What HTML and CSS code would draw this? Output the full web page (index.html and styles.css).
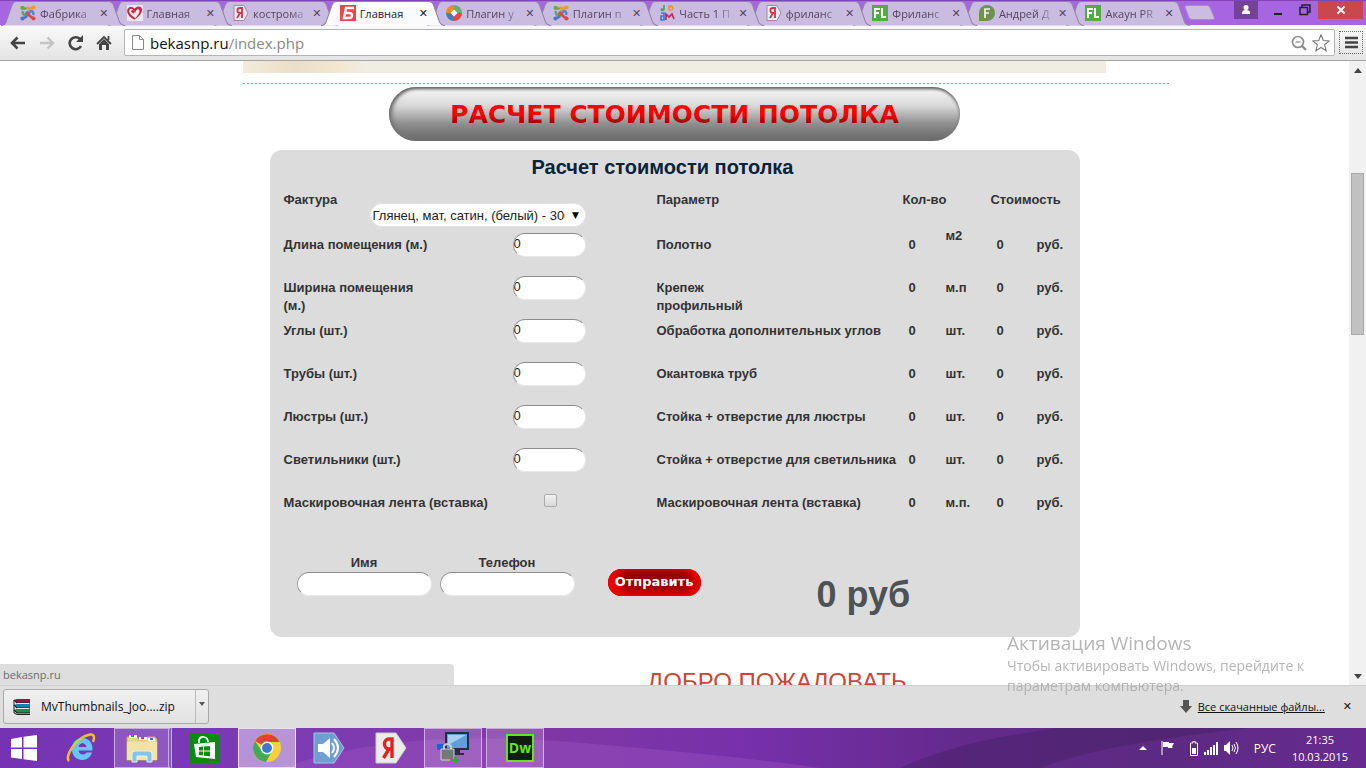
FILE: index.html
```html
<!DOCTYPE html>
<html lang="ru">
<head>
<meta charset="utf-8">
<title>Расчет стоимости потолка</title>
<link rel="stylesheet" href="styles.css">
</head>
<body>
<svg class="defs" width="0" height="0" aria-hidden="true">
  <symbol id="tab-shape" viewBox="0 0 124 25" preserveAspectRatio="none"><path d="M0 24.5C4 24.5 4 23 5 21L11 4C12 1.500 13 .5 15 .5H107C110 .5 111 1.500 112 4L118 21C119 23 120 24.500 124 24.500"/></symbol>
  <symbol id="joomla" viewBox="0 0 16 16"><g fill="none" stroke-width="2.600"><path d="M3 6c-1 3 1 5 3 3l4-4" stroke="#6aa742"/><path d="M6 3c3-1 5 1 3 3L8 7M10 3.500c2-1.500 3-.5 3.500 0" stroke="#f0963a"/><path d="M13 10c1-3-1-5-3-3L6 11" stroke="#5a86c8"/><path d="M6 7l4 4c2 2 3 2 4 2" stroke="#e0483e"/><path d="M3 13c2 0 3-1 4-2" stroke="#4a78c0"/><path d="M3 3c1 0 2 0 3 1.500" stroke="#6aa742"/></g><circle cx="2.500" cy="2.800" r="2.100" fill="#6aa742"/><circle cx="13.500" cy="2.500" r="2.100" fill="#f0963a"/><circle cx="2.500" cy="13.500" r="2.100" fill="#4a78c0"/><circle cx="13.500" cy="13.500" r="2.100" fill="#e0483e"/></symbol>
  <symbol id="heart" viewBox="0 0 16 16"><path fill="#eee6f0" d="M0 0h16v16H0z"/><path d="M7 8L4.500 5.500M8 14C3 11 0 8 1.500 4.500 3 2 6 2.500 7.500 5" fill="none" stroke="#c52a3e" stroke-width="2"/><path d="M6 6C8 1 14 0 15 4c.6 4-3 7-7 10.500 1-3 5-6 4.500-9C12 3.500 9 4 8.500 7.500z" fill="#c52a3e"/></symbol>
  <symbol id="yandex" viewBox="0 0 16 16"><path d="M1 .5h10l4 7.500-4 7.500H1z" fill="#f3e9f5" stroke="#9a8aa8"/><path d="M9 13V3H7C3.500 3 3.500 8 7 8h2M7 8l-3 5" fill="none" stroke="#d43248" stroke-width="1.800"/></symbol>
  <symbol id="bekas" viewBox="0 0 16 16"><path fill="#e8474b" d="M0 0h16v16H0z"/><path d="M14 3H6L4 13h5c4 0 4-5 0-5H5" fill="none" stroke="#fff" stroke-width="2.400"/></symbol>
  <symbol id="wheel" viewBox="0 0 16 16"><path fill="#e8883a" d="M8 8V0a8 8 0 0 0-8 8z"/><path fill="#63b070" d="M8 8h8a8 8 0 0 0-8-8z"/><path fill="#e2474a" d="M8 8v8a8 8 0 0 0 8-8z"/><path fill="#3f7fbd" d="M8 8H0a8 8 0 0 0 8 8z"/><path fill="#fff" d="M8 4.500l3.500 3.500L8 11.500 4.500 8z"/></symbol>
  <symbol id="letters" viewBox="0 0 16 16"><g fill="none" stroke-width="1.700"><path d="M2 4h3V0M5 4c0 2-3 2-3 0" stroke="#4ea84c"/><path d="M9 1h3c3 1 2 4 0 4-3 0-3-3 0-3" stroke="#e29a42"/><path d="M2 8h3v3H2v4h3v-4" stroke="#397fd0"/><path d="M7 15V9l3 3 3-3 2 5" stroke="#cb294c"/></g></symbol>
  <symbol id="fl" viewBox="0 0 16 16"><path fill="#5aa548" d="M0 0h16v16H0z"/><path d="M3 13V4h5M3 8h4M10 3v9h4" fill="none" stroke="#fff" stroke-width="1.900"/></symbol>
  <symbol id="free" viewBox="0 0 16 16"><path fill="#70934c" d="M0 16V8a8 8 0 1 1 8 8z"/><path d="M6 13V4h5M6 8h4" fill="none" stroke="#f2f5ea" stroke-width="1.700"/></symbol>
</svg>

<header class="tabstrip">
  <nav class="tabs" aria-label="Вкладки">
    <div class="tab"><svg class="shape"><use href="#tab-shape"/></svg><svg class="fav"><use href="#joomla"/></svg><span class="name">Фабрика</span><button class="close" aria-label="Закрыть">✕</button></div>
    <div class="tab"><svg class="shape"><use href="#tab-shape"/></svg><svg class="fav"><use href="#heart"/></svg><span class="name">Главная</span><button class="close" aria-label="Закрыть">✕</button></div>
    <div class="tab"><svg class="shape"><use href="#tab-shape"/></svg><svg class="fav"><use href="#yandex"/></svg><span class="name">кострома</span><button class="close" aria-label="Закрыть">✕</button></div>
    <div class="tab active"><svg class="shape"><use href="#tab-shape"/></svg><svg class="fav"><use href="#bekas"/></svg><span class="name">Главная</span><button class="close" aria-label="Закрыть">✕</button></div>
    <div class="tab"><svg class="shape"><use href="#tab-shape"/></svg><svg class="fav"><use href="#wheel"/></svg><span class="name">Плагин у</span><button class="close" aria-label="Закрыть">✕</button></div>
    <div class="tab"><svg class="shape"><use href="#tab-shape"/></svg><svg class="fav"><use href="#joomla"/></svg><span class="name">Плагин п</span><button class="close" aria-label="Закрыть">✕</button></div>
    <div class="tab"><svg class="shape"><use href="#tab-shape"/></svg><svg class="fav"><use href="#letters"/></svg><span class="name">Часть 1 П</span><button class="close" aria-label="Закрыть">✕</button></div>
    <div class="tab"><svg class="shape"><use href="#tab-shape"/></svg><svg class="fav"><use href="#yandex"/></svg><span class="name">фриланс</span><button class="close" aria-label="Закрыть">✕</button></div>
    <div class="tab"><svg class="shape"><use href="#tab-shape"/></svg><svg class="fav"><use href="#fl"/></svg><span class="name">Фриланс</span><button class="close" aria-label="Закрыть">✕</button></div>
    <div class="tab"><svg class="shape"><use href="#tab-shape"/></svg><svg class="fav"><use href="#free"/></svg><span class="name">Андрей Д</span><button class="close" aria-label="Закрыть">✕</button></div>
    <div class="tab"><svg class="shape"><use href="#tab-shape"/></svg><svg class="fav"><use href="#fl"/></svg><span class="name">Акаун PR</span><button class="close" aria-label="Закрыть">✕</button></div>
  </nav>
  <button class="newtab" aria-label="Новая вкладка"><svg width="32" height="16" viewBox="0 0 32 16"><path d="M1 2Q1 .5 3 .5H23Q25 .5 26 2.500L30 12Q31 14.500 29 14.500H8Q6 14.500 5 12.500z" fill="#cbbde2" stroke="#a98bc8"/></svg></button>
  <div class="window-buttons">
    <button class="user" aria-label="Пользователь"><svg width="12" height="12" viewBox="0 0 12 12"><circle cx="6" cy="3.500" r="2.500" fill="#fff"/><path d="M2 10V8.500Q2 6 6 6t4 2.500V10z" fill="#fff"/></svg></button>
    <button class="min" aria-label="Свернуть"><svg width="10" height="12" viewBox="0 0 10 12"><path d="M1 9h8v2H1z" fill="#222"/></svg></button>
    <button class="max" aria-label="Восстановить"><svg width="12" height="12" viewBox="0 0 12 12"><path d="M3 3V1h8v7H9M1 3.500h7.500v7H1z" fill="none" stroke="#222" stroke-width="1.500"/></svg></button>
    <button class="quit" aria-label="Закрыть окно"><svg width="10" height="10" viewBox="0 0 10 10"><path d="M1.500 1.500l7 7M8.500 1.500l-7 7" stroke="#fff" stroke-width="1.800"/></svg></button>
  </div>
</header>

<div class="toolbar">
  <button aria-label="Назад"><svg width="18" height="16" viewBox="0 0 18 16"><path d="M17 8H4M9.500 2.500L4 8l5.500 5.500" fill="none" stroke="#444" stroke-width="2.600"/></svg></button>
  <button aria-label="Вперёд"><svg width="18" height="16" viewBox="0 0 18 16"><path d="M3 8h13M10.500 2.500L16 8l-5.500 5.500" fill="none" stroke="#c4c4c4" stroke-width="2.400"/></svg></button>
  <button aria-label="Обновить"><svg width="18" height="16" viewBox="0 0 18 16"><path d="M15 11a6 6 0 1 1-1-7" fill="none" stroke="#444" stroke-width="2.600"/><path d="M17 0v7h-7z" fill="#444"/></svg></button>
  <button aria-label="Домой"><svg width="18" height="16" viewBox="0 0 18 16"><path d="M9 4l5 5v6h-3v-5H7v5H4V9z" fill="#444"/><path d="M2 9l7-7 7 7M13.500 1v4" fill="none" stroke="#444" stroke-width="1.800"/></svg></button>
  <div class="address">
    <svg width="12" height="15" viewBox="0 0 12 15"><path d="M.5.5H7.500L11.500 4.500V14.500H.5zM7.500.5V4.500H11.500" fill="#fff" stroke="#8a8a8a"/></svg>
    <span class="url">bekasnp.ru<span>/index.php</span></span>
    <button aria-label="Масштаб"><svg width="16" height="16" viewBox="0 0 16 16"><circle cx="7" cy="7" r="5.500" fill="none" stroke="#8c8c8c" stroke-width="1.700"/><path d="M4.500 7h5" stroke="#8c8c8c" stroke-width="1.200"/><path d="M11 11l4 4" stroke="#8c8c8c" stroke-width="2.400"/></svg></button>
    <button aria-label="Закладка"><svg width="18" height="18" viewBox="0 0 18 18"><path d="M9 .8l2.300 5.700 6 .4-4.700 3.900 1.600 6L9 13.500l-5.200 3.300 1.600-6L.7 6.900l6-.4z" fill="#fff" stroke="#777" stroke-width="1.100"/></svg></button>
  </div>
  <button class="menu" aria-label="Меню"><svg width="13" height="13" viewBox="0 0 13 13"><path d="M0 2h13M0 6.500h13M0 11h13" stroke="#444" stroke-width="2.600"/></svg></button>
</div>

<div class="viewport">
  <main class="page">
    <div class="content">
      <div class="banner"></div>
      <div class="rule"></div>
      <button class="headline"><span>РАСЧЕТ СТОИМОСТИ ПОТОЛКА</span></button>
      <form class="calc">
        <h2>Расчет стоимости потолка</h2>
        <div class="columns">
          <div class="inputs">
            <div class="row first"><label for="texture">Фактура</label><span class="select"><select id="texture"><option>Глянец, мат, сатин, (белый) - 300</option></select></span></div>
            <div class="row"><label for="length">Длина помещения (м.)</label><input id="length" type="text" value="0"></div>
            <div class="row"><label for="width">Ширина помещения<br>(м.)</label><input id="width" type="text" value="0"></div>
            <div class="row"><label for="corners">Углы (шт.)</label><input id="corners" type="text" value="0"></div>
            <div class="row"><label for="pipes">Трубы (шт.)</label><input id="pipes" type="text" value="0"></div>
            <div class="row"><label for="chandeliers">Люстры (шт.)</label><input id="chandeliers" type="text" value="0"></div>
            <div class="row"><label for="lamps">Светильники (шт.)</label><input id="lamps" type="text" value="0"></div>
            <div class="row"><label for="tape">Маскировочная лента (вставка)</label><input id="tape" type="checkbox"></div>
          </div>
          <table class="prices">
            <colgroup><col><col class="c-qty"><col class="c-unit"><col class="c-cost"><col class="c-rub"></colgroup>
            <thead><tr><th>Параметр</th><th colspan="2" class="outdent">Кол-во</th><th colspan="2" class="outdent">Стоимость</th></tr></thead>
            <tbody>
              <tr><td>Полотно</td><td>0</td><td><sup>м2</sup></td><td>0</td><td>руб.</td></tr>
              <tr><td>Крепеж<br>профильный</td><td>0</td><td>м.п</td><td>0</td><td>руб.</td></tr>
              <tr><td>Обработка дополнительных углов</td><td>0</td><td>шт.</td><td>0</td><td>руб.</td></tr>
              <tr><td>Окантовка труб</td><td>0</td><td>шт.</td><td>0</td><td>руб.</td></tr>
              <tr><td>Стойка + отверстие для люстры</td><td>0</td><td>шт.</td><td>0</td><td>руб.</td></tr>
              <tr><td>Стойка + отверстие для светильника</td><td>0</td><td>шт.</td><td>0</td><td>руб.</td></tr>
              <tr><td>Маскировочная лента (вставка)</td><td>0</td><td>м.п.</td><td>0</td><td>руб.</td></tr>
            </tbody>
          </table>
        </div>
        <div class="order">
          <div class="field"><label for="name">Имя</label><input id="name" type="text"></div>
          <div class="field"><label for="phone">Телефон</label><input id="phone" type="text"></div>
          <button class="send" type="button">Отправить</button>
          <output class="total">0 руб</output>
        </div>
      </form>
      <h1 class="welcome">ДОБРО ПОЖАЛОВАТЬ</h1>
    </div>
  </main>
  <div class="scrollbar"><span class="up"></span><div class="track"><div class="thumb"></div></div><span class="down"></span></div>
  <div class="status">bekasnp.ru</div>
</div>

<div class="downloads">
  <div class="file">
    <button class="open"><svg width="18" height="16" viewBox="0 0 18 16"><path d="M1 1l3-1h13v4H4z" fill="#8d1745"/><path d="M1 6l3-1h13v4H4z" fill="#157fb0"/><path d="M1 11l3-1h13v4H4z" fill="#18904c"/><path d="M1 1l3 3h13M1 6l3 3h13M1 11l3 3h13" fill="none" stroke="#222" stroke-width="1.200"/><path d="M4 4.500h12M4 9.500h12" stroke="#fff" stroke-width=".8"/><path d="M1 1v13l3 1.500h13" fill="none" stroke="#222"/></svg><span>MvThumbnails_Joo....zip</span></button>
    <button class="more" aria-label="Действия"><svg width="6" height="4" viewBox="0 0 6 4"><path d="M0 0h6L3 4z" fill="#555"/></svg></button>
  </div>
  <div class="all"><svg width="12" height="13" viewBox="0 0 12 13"><path d="M3 0h6v6h3l-6 7-6-7h3z" fill="#555"/></svg><a href="#">Все скачанные файлы...</a><button aria-label="Закрыть панель">✕</button></div>
</div>

<footer class="taskbar">
  <svg class="wave" viewBox="0 0 1366 40" preserveAspectRatio="none" aria-hidden="true"><path d="M280 40Q400 0 570 14T820 40z" fill="#a35ac8" opacity=".35"/><path d="M900 40Q960 12 1060 0H1250Q1100 16 1040 40z" fill="#3c1c58" opacity=".35"/></svg>
  <button class="start" aria-label="Пуск"><svg width="28" height="26" viewBox="0 0 28 26"><path d="M1 4l11-2v10.500H1zM13.500 1.800L27 0v12.500H13.500zM1 14h11v10L1 22.500zM13.500 14H27v12l-13.500-1.800z" fill="#fff"/></svg></button>
  <button class="app" aria-label="Internet Explorer"><svg width="32" height="32" viewBox="0 0 32 32"><path fill-rule="evenodd" d="M17.500 6C24 6 28 11 27.500 18.500H13.500c.5 4.500 6.500 5 8 2H27c-1 4-5 7.500-9.500 7.500C11.500 28 7 24 7 17S11.500 6 17.500 6zM13.500 15h8c-1-5-7-5-8 0z" fill="#64c6f3"/><path d="M4 29C-1 25 11 5 25 2.500c5-.5 4.500 4 3 7.500" fill="none" stroke="#f3bd32" stroke-width="2.500"/></svg></button>
  <button class="app open stack" aria-label="Проводник"><svg width="34" height="30" viewBox="0 0 34 30"><path d="M2 4h10l2 3h8V4h8l2 3v20H2z" fill="#ecd789" stroke="#c8a952"/><path d="M4 2h8v3H4zM14 4h8v3h-8zM23 5h7v3h-7z" fill="#fff"/><path d="M6 2h3v2H6z" fill="#2e9c3c"/><path d="M16 4h3v2h-3z" fill="#d43c34"/><path d="M25 5h3v2h-3z" fill="#3874c8"/><path d="M2 9h30v18H2z" fill="#f3e4a6"/><path d="M7 29v-8q0-3 3-3h14q3 0 3 3v8h-5v-6H12v6z" fill="#83c5ea" stroke="#e0f3fc"/></svg></button>
  <button class="app" aria-label="Магазин"><svg width="30" height="30" viewBox="0 0 30 30"><path fill="#0c8a12" d="M0 0h30v30H0z"/><path d="M4 11l21-2v17L6 24z" fill="#fff"/><path d="M9 10V7q1-4 5-3t4 5" fill="none" stroke="#fff" stroke-width="1.800"/><path d="M9 14l4-.5v4H9zM14 13.500l6-.5v4.500h-6zM9 18.500h4v4l-4-.5zM14 18.500h6v4.800l-6-.5z" fill="#0c8a12"/></svg></button>
  <button class="app open current" aria-label="Chrome"><svg width="30" height="30" viewBox="0 0 30 30"><circle cx="15" cy="15" r="14" fill="#f7cf3c"/><path d="M15 15L3 8A14 14 0 0 1 27.500 9H15z" fill="#dc4437"/><path d="M2.900 8A14 14 0 0 0 14 29l6-11-10 0z" fill="#45a853"/><circle cx="15" cy="15" r="6.500" fill="#fff"/><circle cx="15" cy="15" r="5" fill="#3f7ac8"/></svg></button>
  <button class="app" aria-label="Звук"><svg width="32" height="32" viewBox="0 0 32 32"><path d="M1 1h20l10 15-10 15H1z" fill="#6e9fd0" stroke="#a5c3e2"/><path d="M5 12h5l7-6v20l-7-6H5z" fill="#fff"/><path d="M19 11q4 5 0 10M21 7q8 9 0 18" fill="none" stroke="#fff" stroke-width="2"/></svg></button>
  <button class="app" aria-label="Яндекс"><svg width="32" height="32" viewBox="0 0 32 32"><path d="M1 1h20l10 15-10 15H1z" fill="#ececec" stroke="#c9c9c9"/><path d="M17 26V7h-3c-6 0-6 10 0 10h3M14 17L8.500 26" fill="none" stroke="#e3231d" stroke-width="3.400"/></svg></button>
  <button class="app open" aria-label="Удалённый доступ"><svg width="34" height="32" viewBox="0 0 34 32"><path d="M10 1h22v16H10z" fill="#5fa0d8" stroke="#22303e" stroke-width="2"/><path d="M12 3h18L12 13z" fill="#a7d0f0"/><path d="M18 18h6v3h4v2H16z" fill="#26303a"/><path d="M1 12h6v6H1z" fill="#1c62da"/><path d="M8 17v-3q3-4 7 0v3" fill="none" stroke="#c9c9c9" stroke-width="2"/><path d="M5 17h13v11H5z" fill="#777" stroke="#d5d5d5"/><path d="M14 27h4v-3l5 4-5 4v-2h-4z" fill="#25b02d"/></svg></button>
  <button class="app open" aria-label="Dreamweaver"><span class="dw">Dw</span></button>
  <div class="tray">
    <svg width="8" height="6" viewBox="0 0 8 6"><path d="M4 1l4 4H0z" fill="#fff"/></svg>
    <svg class="flag" width="14" height="14" viewBox="0 0 14 14"><path d="M1 0v14" stroke="#fff"/><path d="M2 1h6v1h5l-2 4 1 1H7V6H2z" fill="#fff"/></svg>
    <svg class="battery" width="8" height="15" viewBox="0 0 8 15"><path d="M3 0h2v2h2.500v12.500H.5V2H3z" fill="none" stroke="#fff"/><path d="M2 7h4v6H2z" fill="#fff"/></svg>
    <svg width="14" height="13" viewBox="0 0 14 13"><path d="M0 10h2v3H0zM3 8h2v5H3zM6 5h2v8H6zM9 3h2v10H9zM12 0h2v13h-2z" fill="#fff"/></svg>
    <svg width="15" height="14" viewBox="0 0 15 14"><path d="M0 4h2l4-4v14l-4-4H0z" fill="#fff"/><path d="M8 4q2 3 0 6M10 3q3 4 0 8M12 1q4 6 0 12" fill="none" stroke="#fff"/></svg>
    <span class="lang">РУС</span>
    <div class="clock"><span>21:35</span><span>10.03.2015</span></div>
  </div>
</footer>

<aside class="activation"><strong>Активация Windows</strong><p>Чтобы активировать Windows, перейдите к параметрам компьютера.</p></aside>
</body>
</html>
```
FILE: styles.css
```css
* { box-sizing: border-box; }
html, body { height: 100%; }
body {
  margin: 0;
  display: flex;
  flex-direction: column;
  position: relative;
  overflow: hidden;
  background: #fff;
  color: #333;
  font-family: "Open Sans", "Noto Sans", sans-serif;
  font-size: 12px;
}
button { border: 0; padding: 0; background: none; font: inherit; color: inherit; display: flex; align-items: center; justify-content: center; }
svg { flex: none; display: block; }
.defs { position: absolute; }

/* Tabs */
.tabstrip { display: flex; height: 25px; flex: none; background: #a865e2; border-top: 1px solid #8243b8; padding-left: 7px; }
.tabs { flex: 0 1 1172px; display: grid; grid-template-columns: repeat(11, minmax(0, 1fr)); }
.tab { position: relative; display: flex; align-items: center; padding-left: 13px; color: #54455f; }
.tab:nth-child(1) { z-index: 11; }
.tab:nth-child(2) { z-index: 10; }
.tab:nth-child(3) { z-index: 9; }
.tab:nth-child(5) { z-index: 7; }
.tab:nth-child(6) { z-index: 6; }
.tab:nth-child(7) { z-index: 5; }
.tab:nth-child(8) { z-index: 4; }
.tab:nth-child(9) { z-index: 3; }
.tab:nth-child(10) { z-index: 2; }
.tab.active { z-index: 12; color: #222; }
.shape { position: absolute; left: -6px; top: 0; width: calc(100% + 18px); height: 25px; fill: #cabce1; stroke: #9382a8; }
.active .shape { fill: #fbfafc; }
.fav { position: relative; width: 16px; height: 16px; }
.name { position: relative; flex: none; width: 53px; margin-left: 4px; overflow: hidden; white-space: nowrap; font-size: 11px; mask-image: linear-gradient(90deg, #000 70%, rgba(0, 0, 0, .2)); }
.active .name { mask-image: none; }
.close { position: relative; width: 20px; margin-left: 1px; font: 11px "DejaVu Sans", sans-serif; }
.newtab { width: 32px; margin-left: 5px; }
.window-buttons { display: flex; align-items: flex-start; margin-left: auto; padding-right: 3px; }
.window-buttons button { height: 18px; }
.window-buttons .user { width: 24px; background: #754297; margin-right: 6px; }
.window-buttons .min, .window-buttons .max { width: 27px; }
.window-buttons .quit { width: 45px; background: #c8494d; }

/* Toolbar */
.toolbar { display: flex; align-items: center; gap: 11px; height: 36px; flex: none; padding: 0 3px 0 8px; background: linear-gradient(#fafafa, #e4e4e4); border-bottom: 1px solid #a5a5a5; }
.address { flex: 1; display: flex; align-items: center; height: 27px; padding: 0 4px 0 7px; margin-right: -7px; background: #fff; border: 1px solid #b4b4b4; border-radius: 2px; }
.url { flex: 1; margin-left: 6px; font-size: 15px; line-height: 24px; color: #111; }
.url span { color: #888; }
.address button + button { margin-left: 5px; }
.menu { width: 24px; height: 23px; border: 1px dotted #666; }

/* Page */
.viewport { flex: 1; min-height: 0; display: flex; position: relative; overflow: hidden; }
.page { flex: 1; min-width: 0; overflow: hidden; font-family: "Liberation Sans", Arial, sans-serif; }
.content { max-width: 863px; margin: 0 auto; }
.banner { height: 12px; background: linear-gradient(90deg, #f3eadb, #ecdfc8 6%, #f3e8d4 12%, #f1ede3 14%, #f1ede3); }
.rule { width: 927px; height: 11px; background: repeating-linear-gradient(90deg, #cf8792 0 2px, #fff 2px 4px) bottom / 100% 1px no-repeat; }
.headline {
  width: 571px; height: 54px; margin: 3px auto 9px; border-radius: 27px;
  background: linear-gradient(#efefef 10%, #d8d8d8 35%, #8f8f8f 68%, #676767);
  box-shadow: inset 0 2px 3px #666, inset 3px 0 4px #777;
  font: bold 25px "DejaVu Sans", Verdana, sans-serif;
}
.headline span { background: linear-gradient(#ff0000 50%, #9c0000 80%); -webkit-background-clip: text; background-clip: text; color: transparent; }
.calc { max-width: 810px; margin: 0 auto; padding: 5px 0 21px; background: #dcdcdc; border-radius: 12px; font-size: 13px; font-weight: bold; line-height: 18px; }
.calc h2 { margin: 0 24px 12px 0; font-size: 20px; line-height: 24px; text-align: center; color: #06243a; }
.columns { display: grid; grid-template-columns: 387px 1fr; }
.inputs { padding: 0 71px 0 14px; }
.row { display: flex; justify-content: space-between; align-items: flex-start; height: 43px; }
.row.first { height: 45px; }
.row label { flex: none; }
.calc input[type="text"], .calc select { height: 24px; background: #fff; border: 1px solid #e8e8e8; border-top-color: #8c8c8c; border-left-color: #a0a0a0; border-radius: 12px; font: 13px "Liberation Sans", Arial, sans-serif; color: #222; }
.row input[type="text"] { width: 73px; margin-top: -3px; padding: 0 0 3px; }
.row input[type="checkbox"] { appearance: none; width: 13px; height: 13px; margin: 0 29px 0 0; border: 1px solid #aaa; border-radius: 2px; background: linear-gradient(#f2f2f2, #d8d8d8); }
.select { position: relative; margin-top: 12px; }
.calc select { appearance: none; width: 216px; padding: 0 20px 0 2px; border-color: #e4e4e4; overflow: hidden; }
.select::after { content: "▼"; position: absolute; right: 1px; top: 3px; width: 18px; background: #fff; border-radius: 9px; text-align: center; font: 9px/18px "DejaVu Sans", sans-serif; color: #000; pointer-events: none; }
.prices { width: 100%; table-layout: fixed; border-collapse: collapse; }
.prices th, .prices td { padding: 0; text-align: left; vertical-align: top; white-space: nowrap; height: 43px; }
.prices th { height: 45px; }
.prices .outdent { text-indent: -6px; }
.c-qty { width: 37px; }
.c-unit { width: 51px; }
.c-cost { width: 40px; }
.c-rub { width: 43px; }
.prices sup { font-size: 13px; line-height: 0; vertical-align: 9px; }
.order { display: flex; align-items: flex-start; gap: 8px; padding: 17px 0 0 27px; }
.field { display: flex; flex-direction: column; width: 135px; text-align: center; }
.field input { width: 100%; padding: 0 8px; }
.send { width: 93px; height: 27px; margin: 15px 0 0 25px; border-radius: 14px; background: #960000; box-shadow: inset 9px -3px 7px #f00000, inset -7px 0 7px #f00000; padding-bottom: 2px; color: #fff; font: bold 13px "DejaVu Sans", Verdana, sans-serif; }
.total { margin: 20px 0 0 108px; font-size: 36px; line-height: 42px; color: #4d5255; }
.welcome { margin: 30px 0 0 404px; font-size: 24px; line-height: 30px; font-weight: normal; color: #cf4437; white-space: nowrap; }
.scrollbar { width: 17px; flex: none; display: flex; flex-direction: column; align-items: center; background: #f1f1f1; padding: 7px 0 6px; }
.up, .down { width: 0; height: 0; border: 4px solid transparent; }
.up { border-top: 0; border-bottom: 5px solid #444; }
.down { border-bottom: 0; border-top: 5px solid #444; }
.track { flex: 1; width: 100%; padding: 100px 2px 0; }
.thumb { height: 162px; background: #c1c1c1; border: 1px solid #a8a8a8; }
.status { position: absolute; left: 0; bottom: 0; width: 454px; height: 21px; padding-left: 3px; font-size: 11px; line-height: 21px; color: #6c6c6c; background: #dedede; border-radius: 0 4px 0 0; }

/* Downloads */
.downloads { display: flex; justify-content: space-between; align-items: flex-start; flex: none; height: 43px; padding: 3px 14px 0 3px; background: #dedede; border-top: 1px solid #cfcfcf; color: #111; }
.file { display: flex; height: 35px; border: 1px solid #aaa; border-radius: 3px; background: linear-gradient(#f1f1f1, #e1e1e1); }
.open span { margin-left: 10px; }
.file .open { width: 191px; padding-left: 9px; justify-content: flex-start; }
.more { width: 13px; border-left: 1px solid #bbb; padding-bottom: 6px; }
.all { display: flex; align-items: center; height: 35px; gap: 6px; font-size: 11px; }
.all a { color: #111; }
.all button { margin-left: 12px; font: 11px "DejaVu Sans", sans-serif; }

/* Taskbar */
.taskbar { position: relative; display: flex; flex: none; height: 40px; gap: 4px; background: linear-gradient(90deg, #7533b4, #7c3cb4 20%, #8138a4 38%, #7630aa 55%, #642a8c 70%, #5c2a82 85%, #672b90); color: #fff; }
.wave { position: absolute; width: 100%; height: 100%; }
.taskbar > button, .tray { position: relative; }
.start { width: 48px; }
.app { width: 58px; border: 1px solid transparent; }
.app.open { background: rgba(255, 255, 255, .16); border-color: rgba(255, 255, 255, .5); }
.app.stack { border-right: 4px double rgba(255, 255, 255, .5); }
.app.current { background: rgba(255, 255, 255, .45); border-color: #eadff2; }
.dw { width: 28px; height: 28px; border: 2px solid #63e41d; background: #101c0c; color: #63e41d; font: bold 14px/23px "Open Sans", sans-serif; }
.tray { display: flex; align-items: center; gap: 6px; margin-left: auto; padding-right: 18px; }
.flag { margin: 0 9px 0 8px; }
.lang { margin: 0 10px 0 9px; }
.clock { display: flex; flex-direction: column; text-align: center; font-size: 11px; line-height: 17px; }
.activation { position: absolute; left: 1007px; bottom: 72px; width: 320px; color: #adadad; opacity: .9; }
.activation strong { display: block; font-size: 19px; font-weight: 400; line-height: 26px; }
.activation p { margin: 0; font-size: 14px; line-height: 20px; }
```
